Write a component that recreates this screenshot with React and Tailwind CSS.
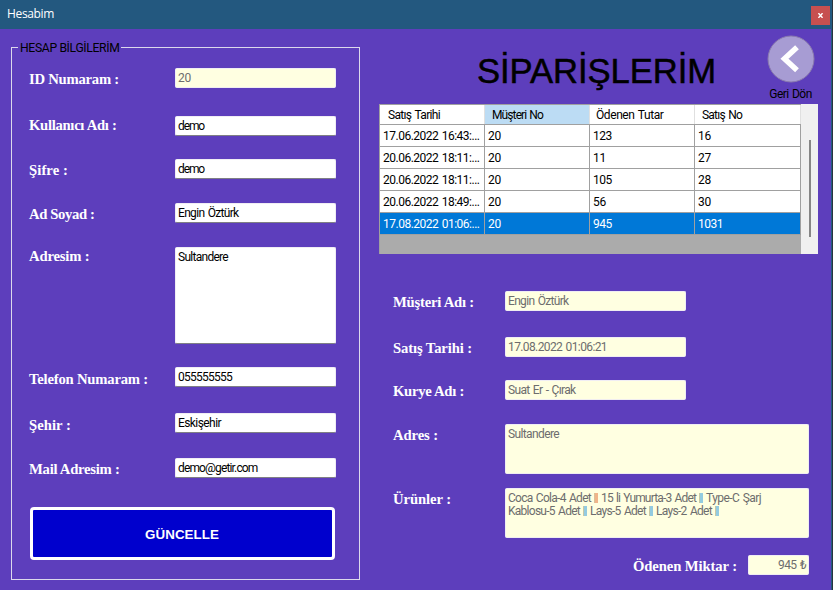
import React, { useLayoutEffect, useRef } from "react";

// Tracks a single line of text so that it spans the given advance width.
function Fit({ w, className = "", children }) {
  const ref = useRef(null);
  useLayoutEffect(() => {
    const el = ref.current;
    el.style.letterSpacing = "0px";
    const natural = el.getBoundingClientRect().width;
    el.style.letterSpacing = `${(w - natural) / el.textContent.length}px`;
  }, [w]);
  return (
    <span ref={ref} className={`inline-block whitespace-pre ${className}`}>
      {children}
    </span>
  );
}

function Label({ w, className, children }) {
  return (
    <div className={`font-['Liberation_Serif',serif] text-[14.67px] leading-[17px] font-bold text-white ${className}`}>
      <Fit w={w}>{children}</Fit>
    </div>
  );
}

function Field({ w, tone = "plain", className = "h-5", children }) {
  const tones = {
    plain: "bg-white text-black border-b-[#7f7f85]",
    muted: "bg-[#ffffe1] text-[#6d6d6d] border-b-[#f0edf0]",
  };
  return (
    <div className={`rounded-[2px] border border-[#f0edf4] pl-0.5 text-[12px] leading-[18px] [word-spacing:1px] ${tones[tone]} ${className}`}>
      {w ? <Fit w={w}>{children}</Fit> : children}
    </div>
  );
}

const account = [
  { label: "ID Numaram :", lw: 90, value: "20", vw: 13, tone: "muted", row: "h-12", pad: "pt-[3px]" },
  { label: "Kullanıcı Adı :", lw: 87.5, value: "demo", vw: 26, row: "h-[43px]", pad: "pt-px" },
  { label: "Şifre :", lw: 39, value: "demo", vw: 26, row: "h-11", pad: "pt-[3px]" },
  { label: "Ad Soyad :", lw: 65.5, value: "Engin Öztürk", vw: 60.5, row: "h-11", pad: "pt-[3px]" },
  { label: "Adresim :", lw: 60.5, value: "Sultandere", vw: 50, row: "h-[120px]", pad: "pt-px", size: "h-[97px]" },
  { label: "Telefon Numaram :", lw: 119, value: "055555555", vw: 54, row: "h-[46px]", pad: "pt-1" },
  { label: "Şehir :", lw: 42, value: "Eskişehir", vw: 43, row: "h-[45px]", pad: "pt-1" },
  { label: "Mail Adresim :", lw: 90.5, value: "demo@getir.com", vw: 79.5, row: "h-[49px]", pad: "pt-[3px]" },
];

const details = [
  { label: "Müşteri Adı :", lw: 81, value: "Engin Öztürk", vw: 60.5, row: "h-[46px]" },
  { label: "Satış Tarihi :", lw: 79, value: "17.08.2022 01:06:21", vw: 99, row: "h-[43px]" },
  { label: "Kurye Adı :", lw: 71, value: "Suat Er - Çırak", vw: 67.5, row: "h-11" },
  { label: "Adres :", lw: 45, value: "Sultandere", vw: 51, row: "h-16", size: "h-[50px] w-[304px]" },
];

const columns = [
  ["Satış Tarihi", 52, "pl-2"],
  ["Müşteri No", 51, "pl-[7px] bg-[#bcdcf4]"],
  ["Ödenen Tutar", 67.5, "pl-1.5"],
  ["Satış No", 40, "pl-[7px]"],
];

const rows = [
  ["17.06.2022 16:43:...", "20", "123", "16"],
  ["20.06.2022 18:11:...", "20", "11", "27"],
  ["20.06.2022 18:11:...", "20", "105", "28"],
  ["20.06.2022 18:49:...", "20", "56", "30"],
  ["17.08.2022 01:06:...", "20", "945", "1031"],
];

function Bar({ warm }) {
  return (
    <span className={`mx-[3px] inline-block h-[10px] w-1 border-l ${warm ? "border-[#d9c29a] bg-[#f0b48a]" : "border-[#c9c8a5] bg-[#93cbe0]"}`} />
  );
}

export default function App() {
  return (
    <div className="flex h-[590px] w-[833px] overflow-hidden bg-[#28343d] font-[Roboto,sans-serif]">
      <div className="flex w-[832px] flex-col border-r border-[#245a80] bg-[#5d3ebc]">
        <header className="flex h-[29px] shrink-0 justify-between bg-[#23587f] pl-[7px] pr-px">
          <div className="pt-[5px] font-['Open_Sans',sans-serif] text-[12px] leading-[18px] text-white">
            <Fit w={47}>Hesabim</Fit>
          </div>
          <div className="mt-1.5 flex h-[19px] w-[19px] items-center justify-center bg-[#c75050]">
            <svg width="5" height="5" viewBox="0 0 5 5" stroke="white" strokeWidth="1.5">
              <path d="M0.4 0.2L4.6 4.8M4.6 0.2L0.4 4.8" />
            </svg>
          </div>
        </header>

        <main className="flex flex-1">
          <fieldset className="relative ml-[11px] mt-[18px] h-[533px] w-[349px] border border-[#dcd8ec] pl-[17px] pt-5">
            <span className="absolute -top-[8px] left-1.5 bg-[#5d3ebc] pl-0.5 pr-px text-[12.2px] leading-4 text-black">
              <Fit w={99.5}>HESAP BİLGİLERİM</Fit>
            </span>
            {account.map((f) => (
              <div key={f.label} className={`flex items-start ${f.row}`}>
                <Label w={f.lw} className={`w-[146px] ${f.pad}`}>{f.label}</Label>
                <Field w={f.vw} tone={f.tone} className={`w-[161px] ${f.size || "h-5"}`}>{f.value}</Field>
              </div>
            ))}
            <button className="ml-px flex h-[53px] w-[305px] items-center justify-center rounded-[4px] border-[3px] border-white bg-[#0000cd] pt-0.5 pr-px font-['Liberation_Sans',sans-serif] text-[13.33px] font-bold text-white">
              <Fit w={74}>GÜNCELLE</Fit>
            </button>
          </fieldset>

          <section className="ml-[19px] w-[452px]">
            <div className="flex h-[75px]">
              <h1 className="w-[388px] pl-[98px] pt-[22px] font-['Liberation_Sans',sans-serif] text-[34.67px] leading-10 text-black [-webkit-text-stroke:0.5px_black]">
                <Fit w={239}>SİPARİŞLERİM</Fit>
              </h1>
              <div className="flex flex-col items-center pt-1.5 text-[12px] text-black">
                <svg width="48" height="48" viewBox="0 0 48 48" fill="none" className="shrink-0">
                  <circle cx="24" cy="24" r="23" fill="#a79cd3" stroke="#8b7cae" />
                  <path d="M30 12.2L17.5 23.7L30 35.2" stroke="white" strokeWidth="5.5" />
                </svg>
                <div className="mt-[3px] pr-px leading-4 [word-spacing:1px]">
                  <Fit w={42.5}>Geri Dön</Fit>
                </div>
              </div>
            </div>

            <div className="flex h-[150px] w-[439px] bg-[#ababab] text-[12px] text-black [word-spacing:1px]">
              <div className="w-[422px] border-l border-t border-[#a0a0a0]">
                <div className="grid h-5 grid-cols-[105px_105px_105px_106px] grid-rows-[19px] border-b border-[#a0a0a0] bg-white leading-[21px]">
                  {columns.map(([name, w, look]) => (
                    <div key={name} className={`border-r border-[#e0e0e0] ${look}`}>
                      <Fit w={w}>{name}</Fit>
                    </div>
                  ))}
                </div>
                {rows.map((r, i) => (
                  <div key={i} className={`grid h-[22px] grid-cols-[105px_105px_105px_106px] border-b border-[#a0a0a0] leading-[22px] ${i === 4 ? "bg-[#0078d7] text-white" : "bg-white"}`}>
                    {r.map((c, j) => (
                      <div key={j} className="border-r border-[#a0a0a0] pl-[3px]">
                        <Fit w={j === 0 ? 96.5 : c.length * 6.1 + 0.6}>{c}</Fit>
                      </div>
                    ))}
                  </div>
                ))}
              </div>
              <div className="flex-1 bg-[#f0f0f0] pl-2 pt-9">
                <div className="h-[97px] w-0.5 bg-[#868686]" />
              </div>
            </div>

            <div className="pl-3.5 pt-[37px]">
              {details.map((f) => (
                <div key={f.label} className={`flex items-start ${f.row}`}>
                  <Label w={f.lw} className="w-28 pt-[3px]">{f.label}</Label>
                  <Field w={f.vw} tone="muted" className={f.size || "h-5 w-[181px]"}>{f.value}</Field>
                </div>
              ))}
              <div className="flex h-[67px] items-start">
                <Label w={58} className="w-28 pt-[3px]">Ürünler :</Label>
                <Field tone="muted" className="h-[50px] w-[304px]">
                  <div className="flex h-[17px] items-center leading-[18px]">
                    <Fit w={83}>Coca Cola-4 Adet</Fit><Bar warm />
                    <Fit w={95}>15 li Yumurta-3 Adet</Fit><Bar />
                    <Fit w={55}>Type-C Şarj</Fit>
                  </div>
                  <div className="flex h-[10px] items-center leading-[14px]">
                    <Fit w={72}>Kablosu-5 Adet</Fit><Bar />
                    <Fit w={56}>Lays-5 Adet</Fit><Bar />
                    <Fit w={56}>Lays-2 Adet</Fit><Bar />
                  </div>
                </Field>
              </div>
              <div className="flex items-start pl-60">
                <Label w={104} className="w-[115px] pt-[3px]">Ödenen Miktar :</Label>
                <Field w={28} tone="muted" className="h-5 w-[61px] pr-0.5 text-right">945 ₺</Field>
              </div>
            </div>
          </section>
        </main>
      </div>
    </div>
  );
}
